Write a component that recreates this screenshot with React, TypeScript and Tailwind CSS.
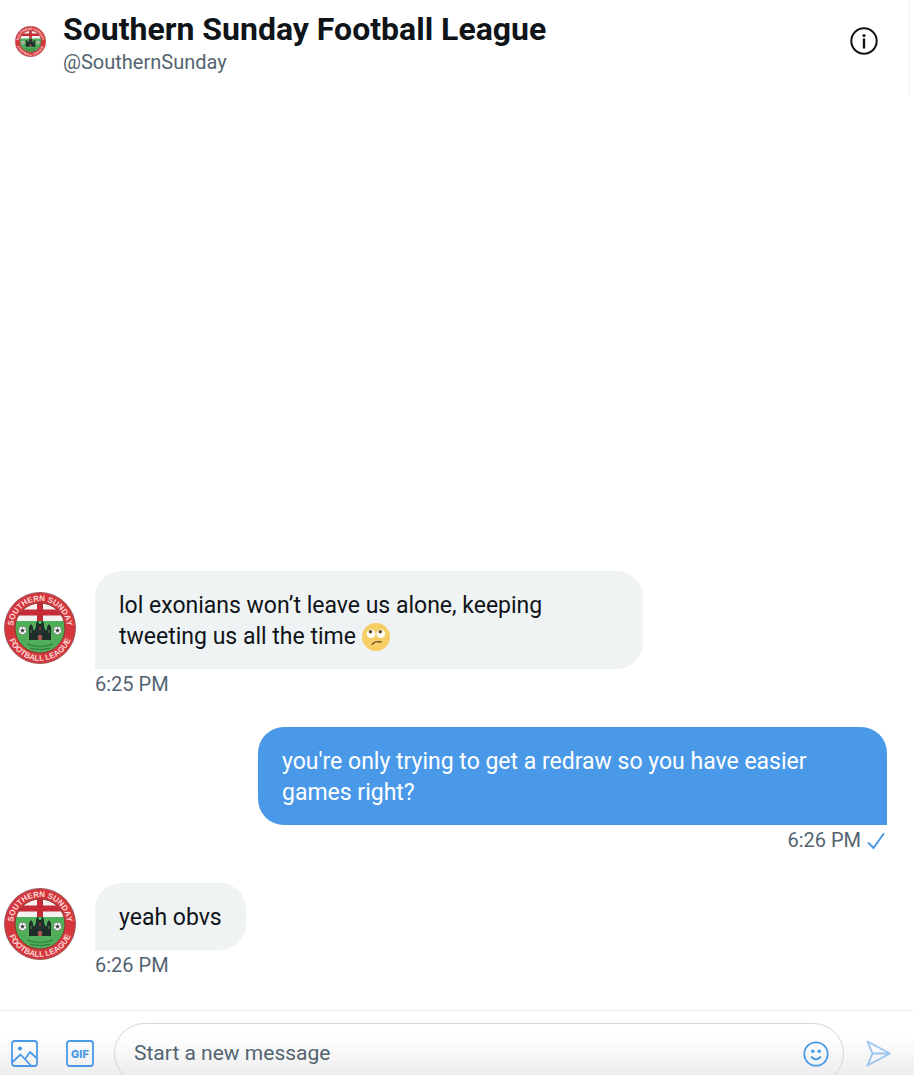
import { useState } from "react";

type Message = {
  id: number;
  text: string;
  time: string;
  mine?: boolean;
  emoji?: boolean;
};

const messages: Message[] = [
  { id: 1, text: "lol exonians won’t leave us alone, keeping tweeting us all the time", time: "6:25 PM", emoji: true },
  { id: 2, text: "you're only trying to get a redraw so you have easier games right?", time: "6:26 PM", mine: true },
  { id: 3, text: "yeah obvs", time: "6:26 PM" },
];

function Football({ x }: { x: number }) {
  return (
    <g transform={`translate(${x} 38.500)`}>
      <circle r="4.2" fill="#f3f6f1" stroke="#4b6b4a" strokeWidth="0.6" />
      <path d="M0-1.8 1.7-.5 1 1.5H-1L-1.7-.5Z" fill="#33443a" />
      <path d="M0-1.8V-4M1.7-.5 3.8-1.2M1 1.5 2.4 3.4M-1 1.5-2.4 3.4M-1.7-.5-3.8-1.2" stroke="#6d7f70" strokeWidth="0.6" />
    </g>
  );
}

function Crest({ id, className }: { id: string; className: string }) {
  return (
    <svg viewBox="0 0 72 72" className={className} role="img" aria-label="League crest">
      <defs>
        <clipPath id={`${id}-inner`}>
          <circle cx="36" cy="36" r="25" />
        </clipPath>
        <path id={`${id}-top`} d="M9 36a27 27 0 0 1 54 0" />
        <path id={`${id}-bottom`} d="M3.200 36a32.800 32.800 0 0 0 65.600 0" />
      </defs>
      <circle cx="36" cy="36" r="35.5" fill="#d5363c" stroke="#9a5a5c" strokeWidth="1" />
      <g clipPath={`url(#${id}-inner)`}>
        <path d="M0 0h72v30H0z" fill="#f6f1f1" />
        <path d="M33 8h6v22h-6zM8 17.500h56v6H8z" fill="#c42b36" />
        <path d="M0 29h72v43H0z" fill="#4fae57" />
        <path d="M23 52q13 5 26 0M26 56q10 3 20 0" fill="none" stroke="#2f7a3c" strokeWidth="1.2" />
        <Football x={18.5} />
        <Football x={53.5} />
        <path
          d="M25 48V35l2-3 2 3v3h2v-2h1v-4l1.500-4 1.500 4h2l1.500-4 1.500 4v4h1v2h2v-3l2-3 2 3v13z"
          fill="#1f2f2a"
        />
        <path d="M34 48v-4q2-3 4 0v4z" fill="#a8595a" />
        <path d="M35 35h2v3h-2z" fill="#8d3440" />
        <path d="M27 38v3M45 38v3" stroke="#4b8a55" strokeWidth="1" />
      </g>
      <circle cx="36" cy="36" r="25" fill="none" stroke="#8b3a35" strokeWidth="1" />
      <g fill="#ffd9d9" fontFamily="'Liberation Sans', sans-serif" fontWeight="700" fontSize="8" textAnchor="middle">
        <text>
          <textPath href={`#${id}-top`} startOffset="50%">SOUTHERN SUNDAY</textPath>
        </text>
        <text>
          <textPath href={`#${id}-bottom`} startOffset="50%">FOOTBALL LEAGUE</textPath>
        </text>
      </g>
    </svg>
  );
}

function RollingEyes() {
  return (
    <svg viewBox="0 0 28 28" className="inline-block size-7 align-[-7px]" role="img" aria-label="Face with rolling eyes">
      <circle cx="14" cy="14" r="14" fill="#f6ce65" />
      <circle cx="9" cy="10.800" r="4.300" fill="#fff" />
      <circle cx="18.800" cy="10.800" r="4.300" fill="#fff" />
      <circle cx="8.500" cy="8.700" r="1.800" fill="#664a26" />
      <circle cx="18.300" cy="8.700" r="1.800" fill="#664a26" />
      <path d="M10 21.200q3.500-3.500 9-2.200" fill="none" stroke="#664a26" strokeWidth="1.300" strokeLinecap="round" />
    </svg>
  );
}

function MessageRow({ message }: { message: Message }) {
  if (message.mine) {
    return (
      <li className="flex flex-col items-end">
        <p className="max-w-[629px] rounded-[26px] rounded-br-none bg-[#4a99e9] px-6 pt-[19px] pb-[17px] text-[23px] leading-[31px] text-white">
          {message.text}
        </p>
        <div className="mt-[3px] flex items-center gap-[6px] pr-[2px] text-[20px] leading-6 text-[#536471]">
          <time>{message.time}</time>
          <svg viewBox="0 0 18 20" className="h-5 w-[18px]" fill="none" stroke="#4a99e9" strokeWidth="2" strokeLinecap="round" aria-label="Sent">
            <path d="M1.500 13 6.500 18 16.500 4" />
          </svg>
        </div>
      </li>
    );
  }

  return (
    <li className="flex items-center gap-[19px]">
      <Crest id={`crest-${message.id}`} className="mb-3 size-[72px] shrink-0" />
      <div className="max-w-[548px]">
        <p className="w-fit rounded-[26px] rounded-bl-none bg-[#eff3f4] px-6 pt-[19px] pb-[17px] text-[23px] leading-[31px] text-[#0f1419]">
          {message.text}
          {message.emoji && <> <RollingEyes /></>}
        </p>
        <time className="mt-[3px] block text-[20px] leading-6 text-[#536471]">{message.time}</time>
      </div>
    </li>
  );
}

export default function App() {
  const [draft, setDraft] = useState("");

  return (
    <main className="flex min-h-screen flex-col bg-white pb-[15px] font-['Roboto',sans-serif]">
      {/* Header */}
      <header className="mr-1 flex h-24 items-start border-r border-[#eff3f4] pr-[31px] pl-[15px]">
        <Crest id="crest-header" className="mt-[26px] size-[31px] shrink-0" />
        <div className="ml-[17px] flex-1 pt-[11px]">
          <h1 className="text-[32px] leading-9 font-bold text-[#0f1419]">Southern Sunday Football League</h1>
          <p className="text-[20px] leading-[30px] text-[#536471]">@SouthernSunday</p>
        </div>
        <button type="button" aria-label="Conversation info" className="mt-[27px]">
          <svg viewBox="0 0 28 28" className="size-7" fill="none" stroke="#0f1419">
            <circle cx="14" cy="14" r="12.700" strokeWidth="2" />
            <path d="M14 12.500v8" strokeWidth="2.400" strokeLinecap="round" />
            <circle cx="14" cy="8.500" r="1.600" fill="#0f1419" stroke="none" />
          </svg>
        </button>
      </header>

      {/* Conversation */}
      <ul className="flex flex-1 flex-col justify-end gap-[31px] pr-[27px] pb-[33px] pl-1">
        {messages.map(message => (
          <MessageRow key={message.id} message={message} />
        ))}
      </ul>

      {/* Composer */}
      <form
        className="flex h-[65px] items-start overflow-hidden border-t border-[#e6ecef] bg-linear-to-b from-white from-40% to-[#ededed] pt-3 pr-[23px] pl-[11px] text-[#4a99e9]"
        onSubmit={e => e.preventDefault()}
      >
        <div className="flex h-[61px] shrink-0 items-center gap-7">
          <button type="button" aria-label="Add photo">
            <svg viewBox="0 0 27 27" className="size-[27px]" fill="none" stroke="currentColor" strokeWidth="1.800" strokeLinejoin="round">
              <rect x="1" y="1" width="25" height="25" rx="2.500" />
              <circle cx="9" cy="8.500" r="2.100" fill="currentColor" stroke="none" />
              <path d="M1.500 22 9.500 14.500 20 25.500M14.500 18.500 19 12 25.500 18" />
            </svg>
          </button>
          <button type="button" aria-label="Add GIF">
            <svg viewBox="0 0 28 27" className="h-[27px] w-7" fill="none" stroke="currentColor" strokeWidth="1.800">
              <rect x="1" y="1" width="26" height="25" rx="2.500" />
              <text x="14" y="17.500" textAnchor="middle" fontFamily="Inter, sans-serif" fontSize="11" fontWeight="800" fill="currentColor" stroke="none">GIF</text>
            </svg>
          </button>
        </div>
        <div className="mr-[22px] ml-5 flex h-[61px] flex-1 items-center rounded-full border border-[#cfd9de] pr-[14px] pl-[19px]">
          <input
            type="text"
            aria-label="Start a new message"
            placeholder="Start a new message"
            value={draft}
            onChange={e => setDraft(e.target.value)}
            className="min-w-0 flex-1 bg-transparent text-[21px] leading-[31px] text-[#0f1419] outline-none placeholder:text-[#536471]"
          />
          <button type="button" aria-label="Add emoji">
            <svg viewBox="0 0 26 26" className="size-[26px]" fill="none" stroke="currentColor" strokeWidth="1.800" strokeLinecap="round">
              <circle cx="13" cy="13" r="11.700" />
              <circle cx="9.800" cy="10.200" r="1.800" fill="currentColor" stroke="none" />
              <circle cx="16.200" cy="10.200" r="1.800" fill="currentColor" stroke="none" />
              <path d="M8.500 16q4.500 4.500 9 0" />
            </svg>
          </button>
        </div>
        <button type="submit" aria-label="Send" className="flex h-[61px] items-center text-[#98c4ef]">
          <svg viewBox="0 0 25 27" className="h-[27px] w-[25px]" fill="none" stroke="currentColor" strokeWidth="1.800" strokeLinejoin="round">
            <path d="M1.500 1.500 24 13.500 1.500 25.500 6.500 13.500ZM6.500 13.500H24" />
          </svg>
        </button>
      </form>
    </main>
  );
}
